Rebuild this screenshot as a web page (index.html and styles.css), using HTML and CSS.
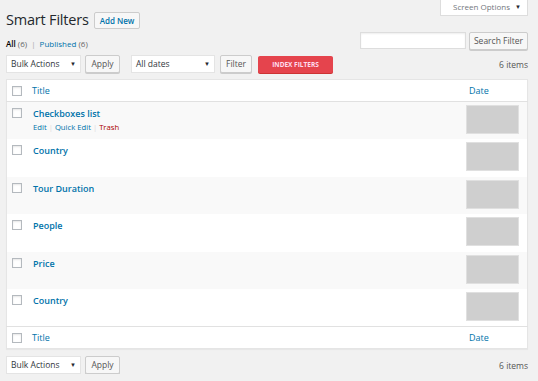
FILE: index.html
```html
<!DOCTYPE html>
<html lang="en">
<head>
    <meta charset="UTF-8">
    <meta name="viewport" content="width=device-width, initial-scale=1.0">
    <title>Smart Filters</title>
    <link rel="stylesheet" href="styles.css">
</head>
<body>
    <div class="wrap">
        <!-- Page header -->
        <div class="page-head">
            <h1>Smart Filters</h1>
            <a class="page-title-action" href="#">Add New</a>
            <div class="screen-options">Screen Options <span class="arrow">▼</span></div>
        </div>

        <div class="views-row">
            <ul class="subsubsub">
                <li><b>All</b> <span class="count">(6)</span> <span class="sep">|</span></li>
                <li><a href="#">Published</a> <span class="count">(6)</span></li>
            </ul>
            <div class="search-box">
                <input type="search" class="search-input">
                <button type="button" class="button">Search Filter</button>
            </div>
        </div>

        <!-- Top actions -->
        <div class="tablenav">
            <div class="select select-bulk">Bulk Actions <span class="arrow">▼</span></div>
            <button type="button" class="button">Apply</button>
            <div class="select select-dates">All dates <span class="arrow">▼</span></div>
            <button type="button" class="button">Filter</button>
            <button type="button" class="index-button">INDEX FILTERS</button>
            <span class="displaying-num">6 items</span>
        </div>

        <table class="list-table">
            <thead>
                <tr>
                    <td class="check-column"><span class="checkbox"></span></td>
                    <th class="column-title"><a href="#">Title</a></th>
                    <th class="column-date"><a href="#">Date</a></th>
                </tr>
            </thead>
            <tbody>
                <tr class="alternate">
                    <td class="check-column"><span class="checkbox"></span></td>
                    <td class="column-title">
                        <a class="row-title" href="#">Checkboxes list</a>
                        <div class="row-actions">
                            <a href="#">Edit</a> <span class="sep">|</span>
                            <a href="#">Quick Edit</a> <span class="sep">|</span>
                            <a class="trash" href="#">Trash</a>
                        </div>
                    </td>
                    <td class="column-date"><div class="thumb"></div></td>
                </tr>
                <tr>
                    <td class="check-column"><span class="checkbox"></span></td>
                    <td class="column-title"><a class="row-title" href="#">Country</a></td>
                    <td class="column-date"><div class="thumb"></div></td>
                </tr>
                <tr class="alternate">
                    <td class="check-column"><span class="checkbox"></span></td>
                    <td class="column-title"><a class="row-title" href="#">Tour Duration</a></td>
                    <td class="column-date"><div class="thumb"></div></td>
                </tr>
                <tr>
                    <td class="check-column"><span class="checkbox"></span></td>
                    <td class="column-title"><a class="row-title" href="#">People</a></td>
                    <td class="column-date"><div class="thumb"></div></td>
                </tr>
                <tr class="alternate">
                    <td class="check-column"><span class="checkbox"></span></td>
                    <td class="column-title"><a class="row-title" href="#">Price</a></td>
                    <td class="column-date"><div class="thumb"></div></td>
                </tr>
                <tr>
                    <td class="check-column"><span class="checkbox"></span></td>
                    <td class="column-title"><a class="row-title" href="#">Country</a></td>
                    <td class="column-date"><div class="thumb"></div></td>
                </tr>
            </tbody>
            <tfoot>
                <tr>
                    <td class="check-column"><span class="checkbox"></span></td>
                    <th class="column-title"><a href="#">Title</a></th>
                    <th class="column-date"><a href="#">Date</a></th>
                </tr>
            </tfoot>
        </table>

        <!-- Bottom actions -->
        <div class="tablenav tablenav-bottom">
            <div class="select select-bulk">Bulk Actions <span class="arrow">▼</span></div>
            <button type="button" class="button">Apply</button>
            <span class="displaying-num">6 items</span>
        </div>
    </div>
</body>
</html>
```

FILE: styles.css
```css
body {
    font-family: "Open Sans", "Noto Sans", sans-serif;
    font-size: 8.5px;
    background: #f1f1f1;
    color: #444;
    margin: 0;
    padding: 0;
}
a {
    color: #0073aa;
    text-decoration: none;
}
.wrap {
    padding: 0 10px 0 6px;
}
.page-head {
    display: flex;
    align-items: flex-start;
    height: 32px;
}
h1 {
    margin: 9px 5px 0 0;
    font-size: 14.5px;
    font-weight: 400;
    letter-spacing: -0.2px;
    color: #23282d;
    line-height: 22px;
}
.page-title-action {
    margin-top: 12px;
    padding: 0 5px;
    height: 17px;
    line-height: 16px;
    border: 1px solid #ccc;
    border-radius: 2px;
    background: #f7f7f7;
    font-size: 8px;
    font-weight: 600;
    box-sizing: border-box;
}
.screen-options {
    margin-left: auto;
    height: 16px;
    width: 88px;
    padding: 0 0 0 12px;
    background: #fff;
    border: 1px solid #ddd;
    border-top: none;
    font-size: 8px;
    line-height: 14px;
    color: #72777c;
    box-sizing: border-box;
}
.arrow {
    font-size: 6px;
    color: #23282d;
    margin-left: 3px;
    vertical-align: 1px;
}
.views-row {
    display: flex;
    align-items: flex-end;
    justify-content: space-between;
    height: 18px;
}
.subsubsub {
    list-style: none;
    display: flex;
    gap: 4px;
    margin: 0 0 1px 0;
    padding: 0;
    font-size: 8px;
    color: #666;
}
.subsubsub b {
    color: #000;
    font-weight: 600;
}
.subsubsub .sep {
    color: #aaa;
    margin-left: 2px;
}
.search-box {
    display: flex;
    gap: 3px;
}
.search-input {
    width: 106px;
    height: 17px;
    border: 1px solid #ddd;
    box-shadow: inset 0 1px 2px rgba(0, 0, 0, 0.07);
    background: #fff;
    box-sizing: border-box;
    padding: 0;
    margin: 0;
}
.button {
    height: 18px;
    padding: 0 5px;
    border: 1px solid #ccc;
    border-radius: 2px;
    background: #f7f7f7;
    box-shadow: 0 1px 0 #ccc;
    color: #555;
    font-family: inherit;
    font-size: 8.5px;
    line-height: 16px;
    box-sizing: border-box;
    margin: 0;
}
.search-box .button {
    width: 59px;
    padding: 0;
}
.tablenav {
    display: flex;
    align-items: center;
    height: 18px;
    margin-top: 5px;
}
.select {
    height: 18px;
    background: #fff;
    border: 1px solid #e4e4e4;
    box-sizing: border-box;
    padding: 0 4px 0 4px;
    color: #32373c;
    font-size: 8.5px;
    line-height: 16px;
    display: flex;
    justify-content: space-between;
}
.select-bulk {
    width: 75px;
    margin-right: 4px;
}
.select-dates {
    width: 84px;
    margin: 0 5px 0 11px;
}
.tablenav .button {
    width: 35px;
    padding: 0;
}
.tablenav .select-dates + .button {
    width: 32px;
}
.index-button {
    margin-left: 6px;
    width: 75px;
    height: 17px;
    border: none;
    border-radius: 2px;
    background: #e5444d;
    box-shadow: 0 1px 0 #c33;
    color: #fde;
    font-family: inherit;
    font-size: 6.5px;
    font-weight: 700;
    padding: 0;
}
.displaying-num {
    margin-left: auto;
    color: #555;
    font-size: 8.5px;
    margin-top: 1px;
}
.list-table {
    width: 522px;
    margin-top: 6px;
    border-collapse: collapse;
    background: #fff;
    border: 1px solid #e5e5e5;
    box-shadow: 0 1px 1px rgba(0, 0, 0, 0.04);
    table-layout: fixed;
}
.list-table th,
.list-table td {
    padding: 0;
    text-align: left;
    vertical-align: top;
    font-weight: 400;
}
.list-table thead tr,
.list-table tfoot tr {
    height: 22px;
}
.list-table thead th,
.list-table thead td {
    border-bottom: 1px solid #e1e1e1;
    vertical-align: middle;
}
.list-table tfoot th,
.list-table tfoot td {
    border-top: 1px solid #e1e1e1;
    vertical-align: middle;
}
.list-table thead a,
.list-table tfoot a {
    font-size: 9px;
}
.list-table th.column-date a {
    margin-left: 3px;
}
.list-table tbody tr {
    height: 37.5px;
}
.alternate {
    background: #f9f9f9;
}
.check-column {
    width: 25px;
}
.checkbox {
    display: block;
    width: 10px;
    height: 10px;
    margin-left: 5px;
    border: 1px solid #b4b9be;
    background: #fff;
    box-shadow: inset 0 1px 2px rgba(0, 0, 0, 0.1);
    box-sizing: border-box;
}
tbody .checkbox {
    margin-top: 6px;
}
.column-date {
    width: 61px;
}
tbody .column-title {
    padding-top: 5px;
    padding-left: 1px;
}
.row-title {
    font-size: 9px;
    font-weight: 600;
}
.row-actions {
    margin-top: 2px;
    font-size: 7.7px;
    color: #ddd;
}
.row-actions .trash {
    color: #a00;
}
.thumb {
    width: 53px;
    height: 29px;
    margin-top: 3px;
    background: #cfcfcf;
    border: 1px solid #e0e0e0;
    box-sizing: border-box;
}
.tablenav-bottom {
    margin-top: 7px;
}
```
